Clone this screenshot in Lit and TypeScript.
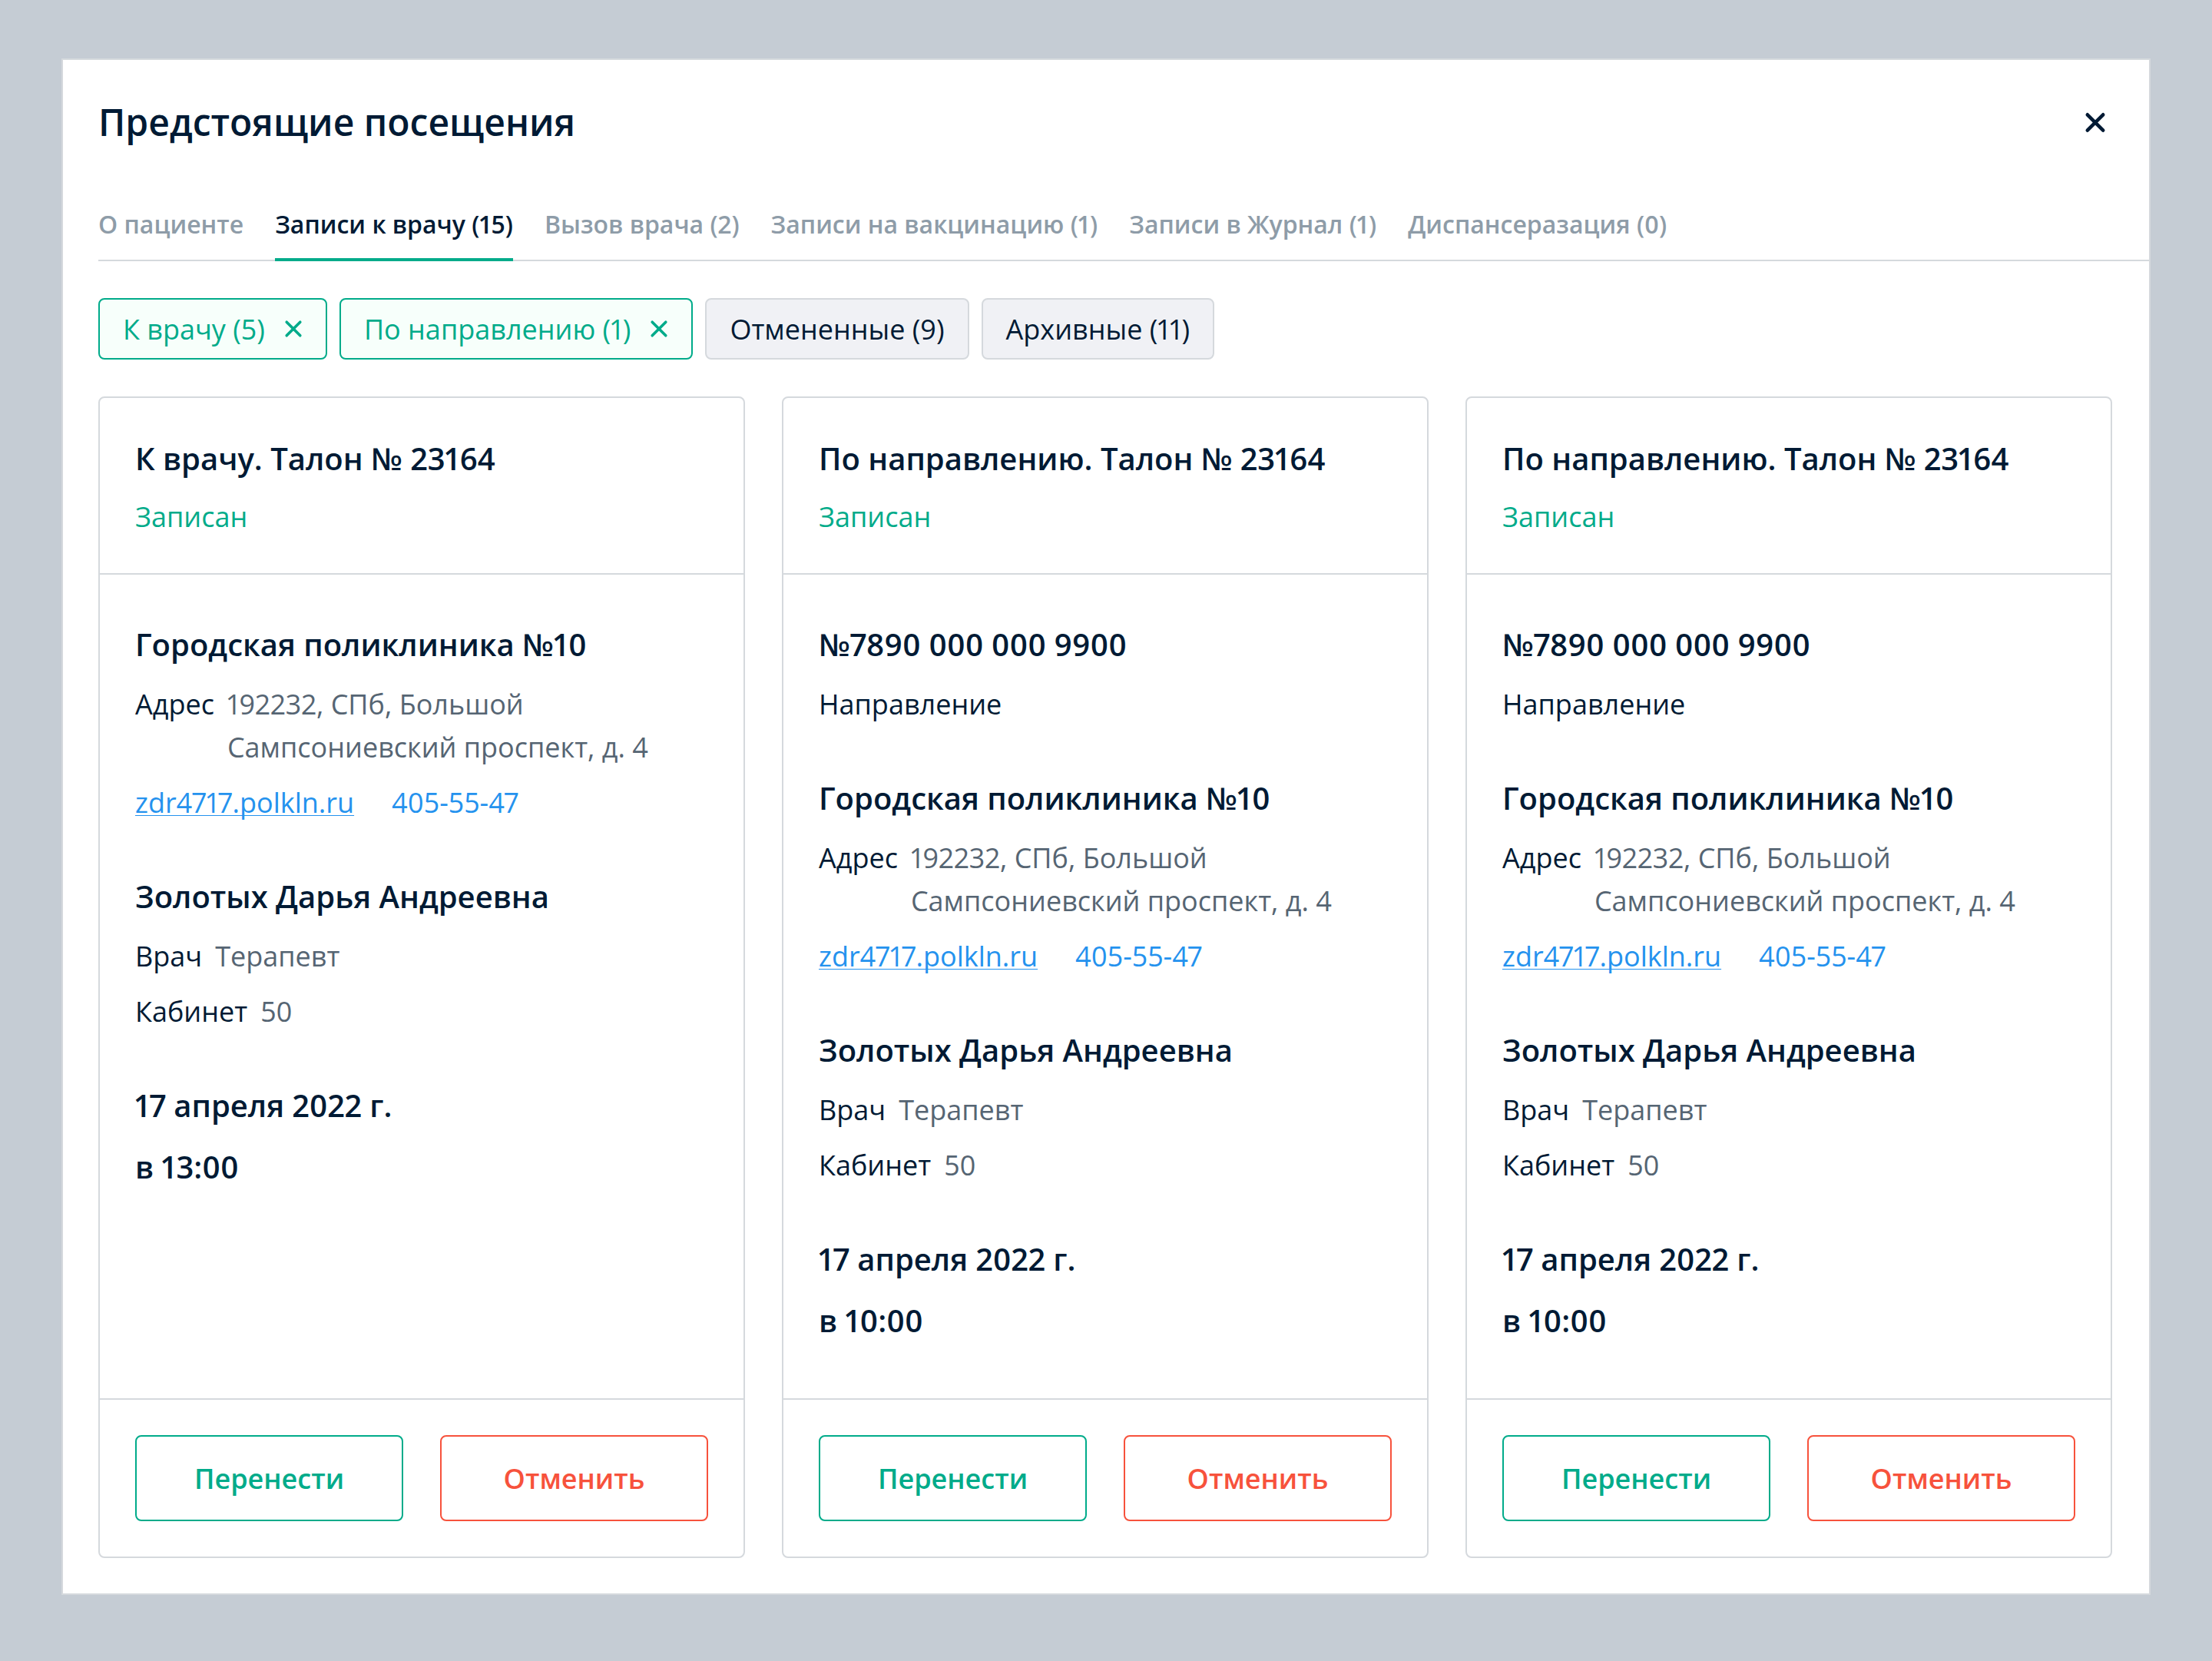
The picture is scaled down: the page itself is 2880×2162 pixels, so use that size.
import { LitElement, html, css } from "lit";
import { customElement, property } from "lit/decorators.js";

interface Visit {
  title: string;
  referral?: string;
  time: string;
}

const VISITS: Visit[] = [
  { title: "К врачу. Талон № 23164", time: "в 13:00" },
  { title: "По направлению. Талон № 23164", referral: "№7890 000 000 9900", time: "в 10:00" },
  { title: "По направлению. Талон № 23164", referral: "№7890 000 000 9900", time: "в 10:00" },
];

const TABS = [
  "О пациенте",
  "Записи к врачу (15)",
  "Вызов врача (2)",
  "Записи на вакцинацию (1)",
  "Записи в Журнал (1)",
  "Диспансеразация (0)",
];

const FILTERS = [
  { label: "К врачу (5)", on: true },
  { label: "По направлению (1)", on: true },
  { label: "Отмененные (9)", on: false },
  { label: "Архивные (11)", on: false },
];

@customElement("visit-card")
export class VisitCard extends LitElement {
  static styles = css`
    :host {
      display: flex;
      flex-direction: column;
      box-sizing: border-box;
      border: 2px solid #d5d9dd;
      border-radius: 8px;
      font-size: 36px;
      line-height: 56px;
      color: #001a34;
    }
    header {
      padding: 51px 46px 45px;
      border-bottom: 2px solid #d5d9dd;
    }
    h2,
    h3,
    p {
      margin: 0;
    }
    h2,
    h3 {
      font-size: 40px;
      line-height: 56px;
      font-weight: 600;
    }
    .status {
      margin-top: 20px;
      color: #00ab8a;
    }
    .body {
      flex: 1;
      display: flex;
      flex-direction: column;
      gap: 66px;
      padding: 63px 46px 73px;
    }
    .row {
      display: flex;
      gap: 17px;
      margin-top: 16px;
    }
    h3 + .row,
    h3 + p {
      margin-top: 22px;
    }
    .value {
      color: #566573;
    }
    .row.links {
      gap: 49px;
    }
    a {
      color: #2492ee;
      text-decoration: none;
    }
    a.site {
      text-decoration: underline;
      text-decoration-thickness: 1px;
      text-decoration-skip-ink: none;
      text-underline-offset: 3px;
    }
    .when {
      display: flex;
      flex-direction: column;
      gap: 24px;
    }
    footer {
      display: flex;
      gap: 48px;
      padding: 46px;
      border-top: 2px solid #d5d9dd;
    }
    button {
      flex: 1;
      height: 112px;
      border: 2px solid #00ab8a;
      border-radius: 8px;
      background: #fff;
      color: #00ab8a;
      font: 600 36px "Open Sans", "Noto Sans", sans-serif;
    }
    button.cancel {
      border-color: #f7523c;
      color: #f7523c;
    }
  `;

  @property({ attribute: false }) visit!: Visit;

  render() {
    const v = this.visit;
    return html`
      <header>
        <h2>${v.title}</h2>
        <p class="status">Записан</p>
      </header>
      <div class="body">
        ${v.referral ? html`<section><h3>${v.referral}</h3><p>Направление</p></section>` : ""}
        <section>
          <h3>Городская поликлиника №10</h3>
          <div class="row">
            <span>Адрес</span>
            <span class="value">192232, СПб, Большой<br />Сампсониевский проспект, д. 4</span>
          </div>
          <div class="row links">
            <a class="site" href="#site">zdr4717.polkln.ru</a>
            <a href="tel:4055547">405-55-47</a>
          </div>
        </section>
        <section>
          <h3>Золотых Дарья Андреевна</h3>
          <div class="row"><span>Врач</span><span class="value">Терапевт</span></div>
          <div class="row"><span>Кабинет</span><span class="value">50</span></div>
        </section>
        <section class="when">
          <h3>17 апреля 2022 г.</h3>
          <h3>${v.time}</h3>
        </section>
      </div>
      <footer>
        <button type="button">Перенести</button>
        <button type="button" class="cancel">Отменить</button>
      </footer>
    `;
  }
}

@customElement("app-root")
export class AppRoot extends LitElement {
  static styles = css`
    :host {
      display: block;
      box-sizing: border-box;
      min-height: 100vh;
      padding: 76px 80px;
      background: #c5ccd4;
      font-family: "Open Sans", "Noto Sans", sans-serif;
      font-variant-numeric: proportional-nums;
      color: #001a34;
    }
    main {
      padding-bottom: 46px;
      border: 2px solid #d5d9dd;
      background: #fff;
    }
    .top {
      display: flex;
      align-items: center;
      justify-content: space-between;
      padding: 46px 46px 0;
    }
    h1 {
      margin: 0;
      font-size: 48px;
      line-height: 70px;
      font-weight: 600;
    }
    button {
      font-family: inherit;
      font-variant-numeric: inherit;
      color: inherit;
    }
    .close {
      display: flex;
      padding: 10px;
      border: 0;
      background: none;
    }
    svg {
      display: block;
      fill: none;
      stroke: currentColor;
      stroke-linecap: round;
    }
    nav {
      display: flex;
      gap: 41px;
      margin: 70px 0 48px 46px;
      border-bottom: 2px solid #d5d9dd;
    }
    .tab {
      height: 76px;
      margin-bottom: -2px;
      padding: 0 0 16px;
      border: 0;
      border-bottom: 4px solid transparent;
      background: none;
      color: #8e9ca8;
      font-size: 32px;
      line-height: 56px;
      font-weight: 600;
    }
    .tab.on {
      border-color: #00ab8a;
      color: #001a34;
    }
    .filters {
      display: flex;
      gap: 16px;
      padding: 0 48px 0 46px;
    }
    .chip {
      display: flex;
      align-items: center;
      gap: 25px;
      height: 80px;
      padding: 0 30px;
      border: 2px solid #d5d9dd;
      border-radius: 8px;
      background: #f0f1f5;
      font-size: 36px;
    }
    .chip.on {
      border-color: #00ab8a;
      background: #f7fffb;
      color: #00ab8a;
    }
    .cards {
      display: grid;
      grid-template-columns: repeat(3, 1fr);
      gap: 48px;
      padding: 48px 48px 0 46px;
    }
  `;

  private closeIcon() {
    return html`<svg width="28" height="28" viewBox="0 0 28 28" stroke-width="4.6" aria-hidden="true">
      <path d="M3.8 4.3L24.2 24.7M24.2 4.3L3.8 24.7" />
    </svg>`;
  }

  private removeIcon() {
    return html`<svg width="24" height="24" viewBox="0 0 24 24" stroke-width="3.6" aria-hidden="true">
      <path d="M3.2 3.2L20.8 20.8M20.8 3.2L3.2 20.8" />
    </svg>`;
  }

  render() {
    return html`
      <main>
        <div class="top">
          <h1>Предстоящие посещения</h1>
          <button class="close" type="button" aria-label="Закрыть">${this.closeIcon()}</button>
        </div>
        <nav>
          ${TABS.map((t, i) => html`<button type="button" class="tab ${i === 1 ? "on" : ""}">${t}</button>`)}
        </nav>
        <div class="filters">
          ${FILTERS.map(
            (f) => html`<button type="button" class="chip ${f.on ? "on" : ""}">
              ${f.label}${f.on ? this.removeIcon() : ""}
            </button>`
          )}
        </div>
        <div class="cards">${VISITS.map((v) => html`<visit-card .visit=${v}></visit-card>`)}</div>
      </main>
    `;
  }
}
